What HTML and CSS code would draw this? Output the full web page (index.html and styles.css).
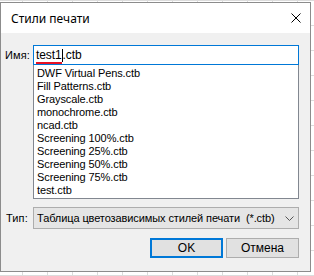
FILE: index.html
```html
<!DOCTYPE html>
<html lang="ru">
<head>
<meta charset="utf-8">
<link rel="stylesheet" href="styles.css">
</head>
<body>
<div class="dialog">
  <div class="titlebar">
    <span class="title">Стили печати</span>
    <svg class="close" width="10" height="10" viewBox="0 0 10 10"><path d="M0.5 0.5L9.5 9.5M9.5 0.5L0.5 9.5" stroke="#000" stroke-width="1" fill="none"/></svg>
  </div>
  <div class="content">
    <div class="field">
      <label class="label">Имя:</label>
      <div class="combo-edit">
        <div class="input"><span class="typed">test1</span><span class="caret"></span><span>.ctb</span></div>
        <ul class="list">
          <li>DWF Virtual Pens.ctb</li>
          <li>Fill Patterns.ctb</li>
          <li>Grayscale.ctb</li>
          <li>monochrome.ctb</li>
          <li>ncad.ctb</li>
          <li>Screening 100%.ctb</li>
          <li>Screening 25%.ctb</li>
          <li>Screening 50%.ctb</li>
          <li>Screening 75%.ctb</li>
          <li>test.ctb</li>
        </ul>
      </div>
    </div>
    <div class="field type-row">
      <label class="label">Тип:</label>
      <div class="select">
        <span class="select-text">Таблица цветозависимых стилей печати&nbsp; (*.ctb)</span>
        <svg class="chev" width="9" height="5" viewBox="0 0 9 5"><path d="M0.5 0.5L4.5 4.5L8.5 0.5" stroke="#555" fill="none"/></svg>
      </div>
    </div>
    <div class="buttons">
      <button class="btn default">OK</button>
      <button class="btn">Отмена</button>
    </div>
  </div>
</div>
</body>
</html>
```
FILE: styles.css
```css
html, body {
  margin: 0;
  padding: 0;
}
body {
  width: 314px;
  height: 276px;
  overflow: hidden;
  background-color: #ffffff;
  background-image:
    linear-gradient(to right, #dcdcdc 1px, transparent 1px),
    linear-gradient(to bottom, #dcdcdc 1px, transparent 1px);
  background-size: 25px 25px;
  background-position: 22px 0, 0 0;
  font-family: "Liberation Sans", Arial, sans-serif;
}
.dialog {
  margin-top: 2px;
  width: 311px;
  height: 270px;
  box-sizing: border-box;
  border: 1px solid #8c8c8c;
  display: flex;
  flex-direction: column;
  background: #f0f0f0;
}
.titlebar {
  height: 30px;
  flex: none;
  background: #ffffff;
  display: flex;
  align-items: center;
  justify-content: space-between;
  padding: 0 9px 0 10px;
}
.title {
  font-family: "Noto Sans", "Open Sans", sans-serif;
  font-size: 12px;
  color: #000;
  margin-top: 1px;
}
.close {
  display: block;
}
.content {
  flex: 1;
  display: flex;
  flex-direction: column;
  padding: 12px 11px 0 3px;
  font-size: 11px;
  color: #000;
}
.field {
  display: flex;
  align-items: flex-start;
}
.label {
  width: 28px;
  flex: none;
  padding-left: 1px;
  line-height: 20px;
  letter-spacing: 0.1px;
}
.combo-edit {
  flex: 1;
  display: flex;
  flex-direction: column;
}
.input {
  height: 20px;
  box-sizing: border-box;
  border: 1px solid #0078d7;
  background: #fff;
  display: flex;
  align-items: center;
  padding-left: 2px;
  font-size: 12px;
  letter-spacing: -0.1px;
}
.typed {
  border-bottom: 2px solid #e81123;
  line-height: 13px;
  margin-top: 2px;
}
.caret {
  width: 1px;
  height: 13px;
  background: #000;
  margin-top: 1px;
}
.list {
  margin: 0;
  padding: 2px 0 2px 3px;
  list-style: none;
  height: 134px;
  box-sizing: border-box;
  background: #fff;
  border: 1px solid #828790;
  border-top: none;
}
.list li {
  height: 13px;
  line-height: 13px;
  letter-spacing: -0.1px;
  white-space: nowrap;
}
.type-row {
  margin-top: 8px;
}
.type-row .label {
  line-height: 22px;
  padding-left: 2px;
  width: 27px;
}
.select {
  flex: 1;
  height: 22px;
  box-sizing: border-box;
  background: #e5e5e5;
  border: 1px solid #adadad;
  display: flex;
  align-items: center;
  justify-content: space-between;
  padding: 0 4px 0 3px;
  font-size: 11px;
  letter-spacing: -0.1px;
  white-space: nowrap;
  overflow: hidden;
}
.select-text {
  overflow: hidden;
}
.chev {
  display: block;
  flex: none;
}
.buttons {
  display: flex;
  justify-content: flex-end;
  gap: 3px;
  margin-top: 9px;
}
.btn {
  width: 73px;
  height: 20px;
  box-sizing: border-box;
  background: #e1e1e1;
  border: 1px solid #adadad;
  font-family: "Liberation Sans", Arial, sans-serif;
  font-size: 12px;
  color: #000;
  padding: 0;
  margin: 0;
}
.btn.default {
  border: 2px solid #0078d7;
}
```
